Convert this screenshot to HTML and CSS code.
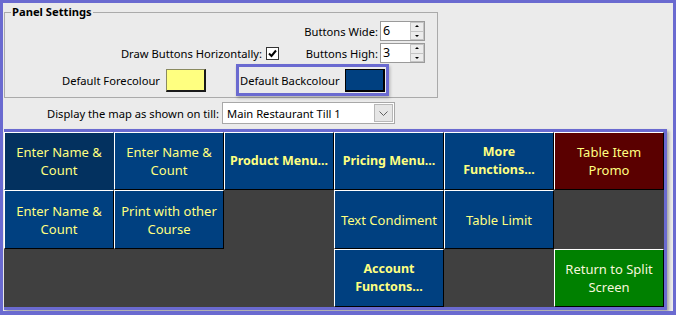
FILE: index.html
```html
<!DOCTYPE html>
<html lang="en">
<head>
    <meta charset="UTF-8">
    <title>Panel Settings</title>
    <link rel="stylesheet" href="styles.css">
</head>
<body>
    <div class="window">
        <fieldset class="group">
            <legend>Panel Settings</legend>
            <div class="row row-wide">
                <span class="label label-spin">Buttons Wide:</span>
                <span class="spin">
                    <span class="spin-value">6</span>
                    <span class="spin-buttons"><span class="spin-up"></span><span class="spin-down"></span></span>
                </span>
            </div>
            <div class="row row-high">
                <span class="label">Draw Buttons Horizontally:</span>
                <span class="check">
                    <svg width="13" height="13" viewBox="0 0 13 13"><path d="M3 6.5 L5.5 9 L10 3.5" fill="none" stroke="#000" stroke-width="2"/></svg>
                </span>
                <span class="label label-spin label-high">Buttons High:</span>
                <span class="spin">
                    <span class="spin-value">3</span>
                    <span class="spin-buttons"><span class="spin-up"></span><span class="spin-down"></span></span>
                </span>
            </div>
            <div class="row row-colours">
                <span class="label label-fore">Default Forecolour</span>
                <span class="swatch swatch-fore"></span>
                <div class="backcolour">
                    <span class="label label-back">Default Backcolour</span>
                    <span class="swatch swatch-back"></span>
                </div>
            </div>
        </fieldset>

        <div class="till-row">
            <span class="till-label">Display the map as shown on till:</span>
            <div class="combo">
                <span class="combo-value">Main Restaurant Till 1</span>
                <span class="combo-button">
                    <svg width="9" height="5" viewBox="0 0 9 5"><path d="M0.5 0.5 L4.5 4.5 L8.5 0.5" fill="none" stroke="#606060" stroke-width="1"/></svg>
                </span>
            </div>
        </div>

        <div class="map">
            <div class="key key-focus">Enter Name &amp;<br>Count</div>
            <div class="key">Enter Name &amp;<br>Count</div>
            <div class="key key-bold">Product Menu...</div>
            <div class="key key-bold">Pricing Menu...</div>
            <div class="key key-bold">More<br>Functions...</div>
            <div class="key key-promo">Table Item<br>Promo</div>

            <div class="key">Enter Name &amp;<br>Count</div>
            <div class="key">Print with other<br>Course</div>
            <div class="key-empty"></div>
            <div class="key">Text Condiment</div>
            <div class="key">Table Limit</div>
            <div class="key-empty"></div>

            <div class="key-empty"></div>
            <div class="key-empty"></div>
            <div class="key-empty"></div>
            <div class="key key-bold">Account<br>Functons...</div>
            <div class="key-empty"></div>
            <div class="key key-split">Return to Split<br>Screen</div>
        </div>
    </div>
</body>
</html>
```

FILE: styles.css
```css
body {
    margin: 0;
    font-family: 'Noto Sans', 'Liberation Sans', sans-serif;
    color: #000;
}

.window {
    width: 676px;
    height: 315px;
    box-sizing: border-box;
    padding-left: 1px;
    border: 3px solid #6a6ad0;
    border-bottom-width: 4px;
    background: #ebebeb;
    overflow: hidden;
}

/* panel settings group */
.group {
    box-sizing: border-box;
    width: 434px;
    height: 95px;
    margin: 0;
    padding: 0 12px 0 6px;
    border: 1px solid #aaaaaa;
    font-size: 11.2px;
}

.group legend {
    padding: 0 1px;
    font-size: 11.2px;
    font-weight: bold;
    line-height: 18px;
}

.row {
    display: flex;
    align-items: center;
}

.row-wide {
    justify-content: flex-end;
    height: 20px;
}

.row-high {
    justify-content: flex-end;
    height: 20px;
    margin-top: 2px;
}

.row-colours {
    height: 32px;
    margin-top: 1px;
    padding-left: 51px;
}

.label {
    white-space: nowrap;
}

.label-spin {
    margin-right: 2px;
}

.label-high {
    width: 99px;
    text-align: right;
}

.check {
    display: block;
    width: 13px;
    height: 13px;
    margin-left: 4px;
    box-sizing: border-box;
    border: 1px solid #333;
    background: #fff;
}

.check svg {
    display: block;
    margin: -1px 0 0 -1px;
}

.spin {
    display: flex;
    box-sizing: border-box;
    width: 45px;
    height: 20px;
    border: 1px solid #9a9a9a;
    background: #fff;
}

.spin-value {
    flex: 1;
    padding-left: 2px;
    font-size: 12.5px;
    line-height: 18px;
}

.spin-buttons {
    display: flex;
    flex-direction: column;
    width: 14px;
}

.spin-up, .spin-down {
    position: relative;
    flex: 1;
    box-sizing: border-box;
    border: 1px solid #c4c4c4;
    background: #ececec;
}

.spin-down {
    border-top: 0;
}

.spin-up::after, .spin-down::after {
    content: '';
    position: absolute;
    left: 4px;
    top: 2px;
    border-left: 2px solid transparent;
    border-right: 2px solid transparent;
}

.spin-up::after {
    border-bottom: 2px solid #000;
}

.spin-down::after {
    top: 3px;
    border-top: 2px solid #000;
}

.label-fore {
    width: 104px;
}

.swatch {
    display: block;
    box-sizing: border-box;
    width: 40px;
    height: 23px;
}

.swatch-fore {
    background: #ffff80;
    border-top: 1px solid #8a8a60;
    border-left: 1px solid #8a8a60;
    border-right: 2px solid #1a1a1a;
    border-bottom: 2px solid #1a1a1a;
}

.backcolour {
    display: flex;
    align-items: center;
    box-sizing: border-box;
    width: 153px;
    height: 32px;
    margin-left: 30px;
    padding-left: 1px;
    border: 3px solid #6a6ad0;
    box-shadow: 1px 2px 3px rgba(0, 0, 0, 0.25);
}

.label-back {
    width: 105px;
}

.swatch-back {
    background: #004080;
    border: 1px solid #000;
    border-right-width: 2px;
    border-bottom-width: 2px;
}

/* till selector */
.till-row {
    display: flex;
    align-items: center;
    margin-top: 4px;
    font-size: 11.2px;
}

.till-label {
    width: 215px;
    margin-right: 3px;
    text-align: right;
    white-space: nowrap;
}

.combo {
    display: flex;
    align-items: center;
    box-sizing: border-box;
    width: 173px;
    height: 22px;
    padding: 1px;
    border: 1px solid #a8a8a8;
    background: #fff;
}

.combo-value {
    flex: 1;
    padding-left: 3px;
}

.combo-button {
    display: flex;
    align-items: center;
    justify-content: center;
    box-sizing: border-box;
    width: 19px;
    height: 18px;
    border: 1px solid #b8b8b8;
    background: #e6e6e6;
}

/* button map */
.map {
    display: grid;
    grid-template-columns: repeat(6, 110px);
    grid-template-rows: 58px 59px 58px;
    width: 660px;
    margin-top: 5px;
    border: 3px solid #6a6ad0;
    border-left: 0;
    background: #404040;
    box-shadow: 2px 2px 3px rgba(0, 0, 0, 0.3);
}

.key {
    display: flex;
    align-items: center;
    justify-content: center;
    box-sizing: border-box;
    border-top: 1px solid #fff;
    border-left: 1px solid #fff;
    border-right: 1px solid #000;
    border-bottom: 1px solid #000;
    background: #004080;
    color: #ffff80;
    font-size: 13px;
    line-height: 18px;
    text-align: center;
}

.key-focus {
    background: #03315f;
    border-right-color: #03315f;
    border-bottom-color: #03315f;
}

.key-bold {
    font-size: 12.5px;
    font-weight: bold;
}

.key-promo {
    background: #5a0000;
}

.key-split {
    background: #008000;
    color: #f6f6dc;
}
```
